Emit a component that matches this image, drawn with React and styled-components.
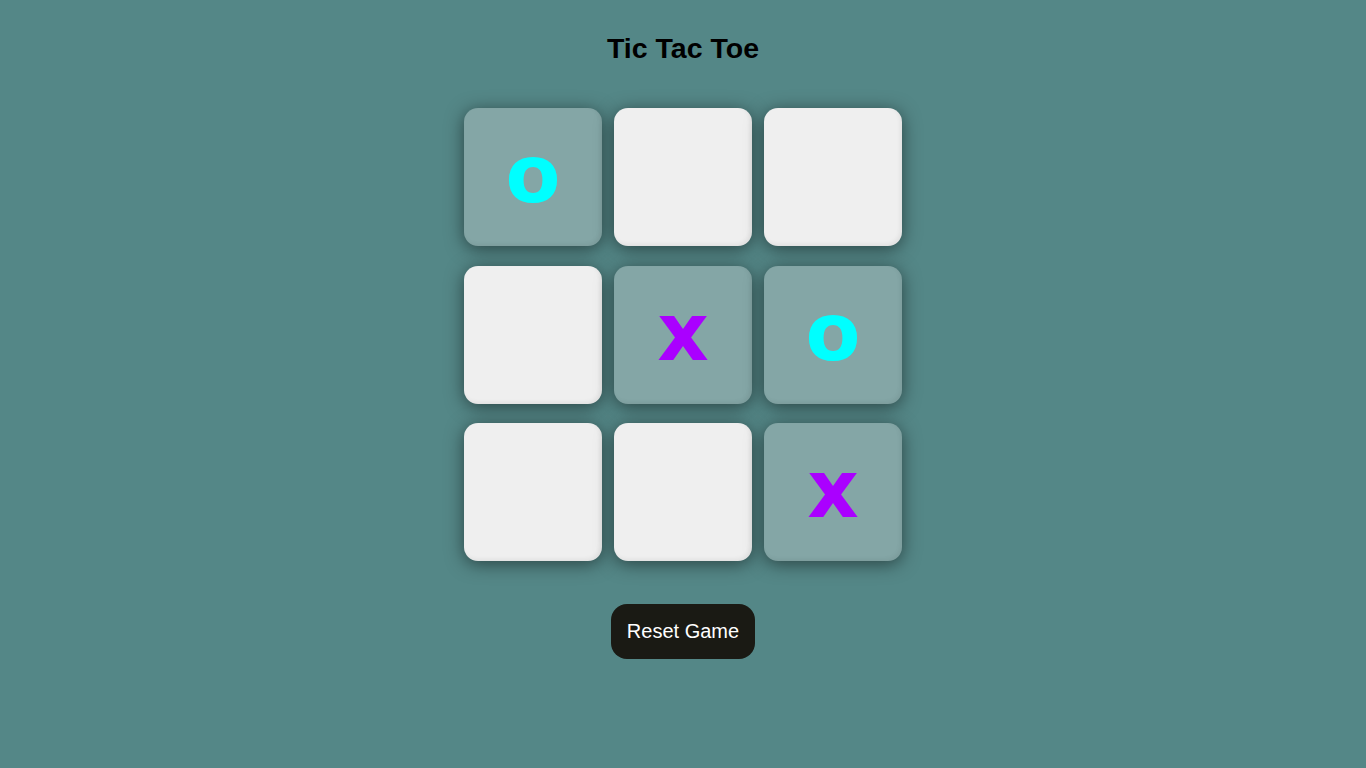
import React, { useState } from "react";
import styled, { createGlobalStyle } from "styled-components";

const Global = createGlobalStyle`
  html, body { margin: 0; padding: 0; background: #548787; }
  body { font-family: "Liberation Sans", Arial, sans-serif; }
`;

const Page = styled.div`
  display: flex;
  flex-direction: column;
  align-items: center;
  min-height: 768px;
  background: #548787;
`;

const Title = styled.h1`
  margin: 32px 0 0;
  height: 32px;
  line-height: 32px;
  font-size: 28.5px;
  font-weight: bold;
  color: #000;
`;

const Board = styled.div`
  display: grid;
  grid-template-columns: repeat(3, 138px);
  grid-auto-rows: 138px;
  column-gap: 12px;
  row-gap: 19.5px;
  margin-top: 44px;
`;

const Cell = styled.button`
  border: none;
  border-radius: 14px;
  background: ${(p) => (p.$filled ? "#84a6a6" : "#efefef")};
  box-shadow: 0 3px 18px rgba(0, 0, 0, 0.5),
    inset -2px -2px 4px rgba(0, 0, 0, 0.06);
  display: flex;
  align-items: center;
  justify-content: center;
  padding: 0 0 4px;
  font-family: "DejaVu Sans", sans-serif;
  font-weight: bold;
  font-size: 80px;
  line-height: 1;
  color: ${(p) => (p.$mark === "x" ? "#aa00ff" : "#00ffff")};
  cursor: pointer;
`;

const Reset = styled.button`
  margin-top: 43px;
  height: 55px;
  padding: 0 16px;
  border: none;
  border-radius: 16px;
  background: #1a1a14;
  color: #fff;
  font-family: "Liberation Sans", Arial, sans-serif;
  font-size: 20px;
  cursor: pointer;
`;

const initial = ["o", "", "", "", "x", "o", "", "", "x"];

export default function App() {
  const [cells, setCells] = useState(initial);
  return (
    <Page>
      <Global />
      <Title>Tic Tac Toe</Title>
      <Board>
        {cells.map((c, i) => (
          <Cell key={i} $filled={!!c} $mark={c}>
            {c}
          </Cell>
        ))}
      </Board>
      <Reset onClick={() => setCells(Array(9).fill(""))}>Reset Game</Reset>
    </Page>
  );
}
